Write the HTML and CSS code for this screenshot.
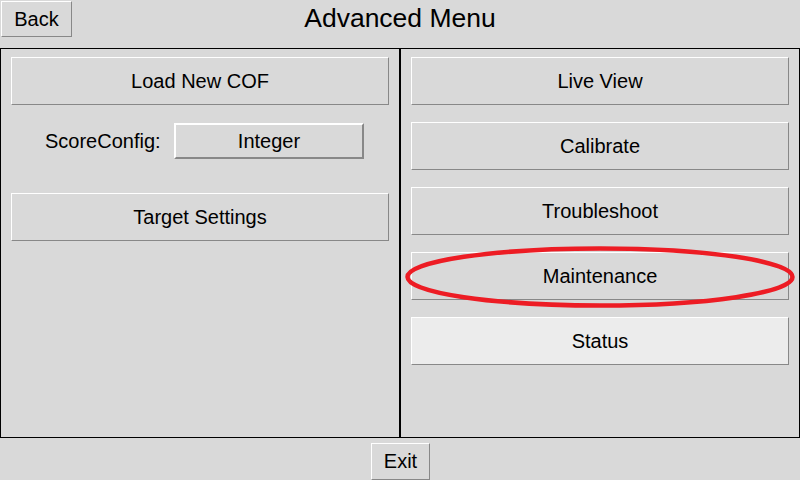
FILE: index.html
```html
<!DOCTYPE html>
<html>
<head>
<meta charset="utf-8">
<link rel="stylesheet" href="styles.css">
</head>
<body>
<div class="app">
  <header class="topbar">
    <button class="btn back">Back</button>
    <h1 class="title">Advanced Menu</h1>
    <span></span>
  </header>
  <main class="panels">
    <section class="panel left">
      <button class="btn big">Load New COF</button>
      <div class="config-row">
        <span class="config-label">ScoreConfig:</span>
        <button class="btn raised">Integer</button>
      </div>
      <button class="btn big">Target Settings</button>
    </section>
    <section class="panel right">
      <button class="btn big">Live View</button>
      <button class="btn big">Calibrate</button>
      <button class="btn big">Troubleshoot</button>
      <button class="btn big">Maintenance</button>
      <button class="btn big active">Status</button>
      <svg class="highlight" width="392" height="62" viewBox="0 0 392 62">
        <ellipse cx="196" cy="31" rx="192.5" ry="28.5" fill="none" stroke="#ed1c24" stroke-width="4.5"/>
      </svg>
    </section>
  </main>
  <footer class="bottombar">
    <button class="btn exit">Exit</button>
  </footer>
</div>
</body>
</html>
```
FILE: styles.css
```css
* {
  box-sizing: border-box;
}
html, body {
  margin: 0;
  padding: 0;
  background: #d9d9d9;
}
body {
  font-family: "Liberation Sans", Arial, sans-serif;
  color: #000;
}
.app {
  width: 800px;
  height: 480px;
  display: flex;
  flex-direction: column;
  overflow: hidden;
}
.btn {
  font-family: "Liberation Sans", Arial, sans-serif;
  font-size: 20px;
  color: #000;
  background: #d9d9d9;
  border: 1px solid;
  border-color: #ffffff #888888 #888888 #ffffff;
  border-radius: 0;
  padding: 0;
  margin: 0;
  display: flex;
  align-items: center;
  justify-content: center;
}
.topbar {
  height: 48px;
  display: grid;
  grid-template-columns: 1fr auto 1fr;
  align-items: start;
}
.back {
  width: 71px;
  height: 36px;
  margin: 1px 0 0 1px;
  justify-self: start;
}
.title {
  margin: 0;
  font-size: 26.5px;
  font-weight: normal;
  line-height: 36px;
}
.panels {
  height: 390px;
  display: flex;
}
.panel {
  width: 400px;
  height: 390px;
  border: 1px solid #000;
  padding: 8px 10px;
  display: flex;
  flex-direction: column;
}
.left .big + .config-row {
  margin-top: 18px;
}
.config-row + .big {
  margin-top: 34px;
}
.right {
  position: relative;
  gap: 17px;
}
.big {
  width: 378px;
  height: 48px;
  flex: none;
}
.active {
  background: #ececec;
}
.config-row {
  height: 36px;
  display: flex;
  align-items: center;
  padding-left: 34px;
  gap: 14px;
}
.config-label {
  font-size: 20px;
  width: 115px;
  white-space: nowrap;
}
.raised {
  width: 190px;
  height: 36px;
  border-width: 2px;
}
.highlight {
  position: absolute;
  left: 3px;
  top: 197px;
  pointer-events: none;
}
.bottombar {
  height: 42px;
  display: flex;
  justify-content: center;
  padding-top: 5px;
}
.exit {
  width: 59px;
  height: 37px;
  margin-left: 1px;
}
```
